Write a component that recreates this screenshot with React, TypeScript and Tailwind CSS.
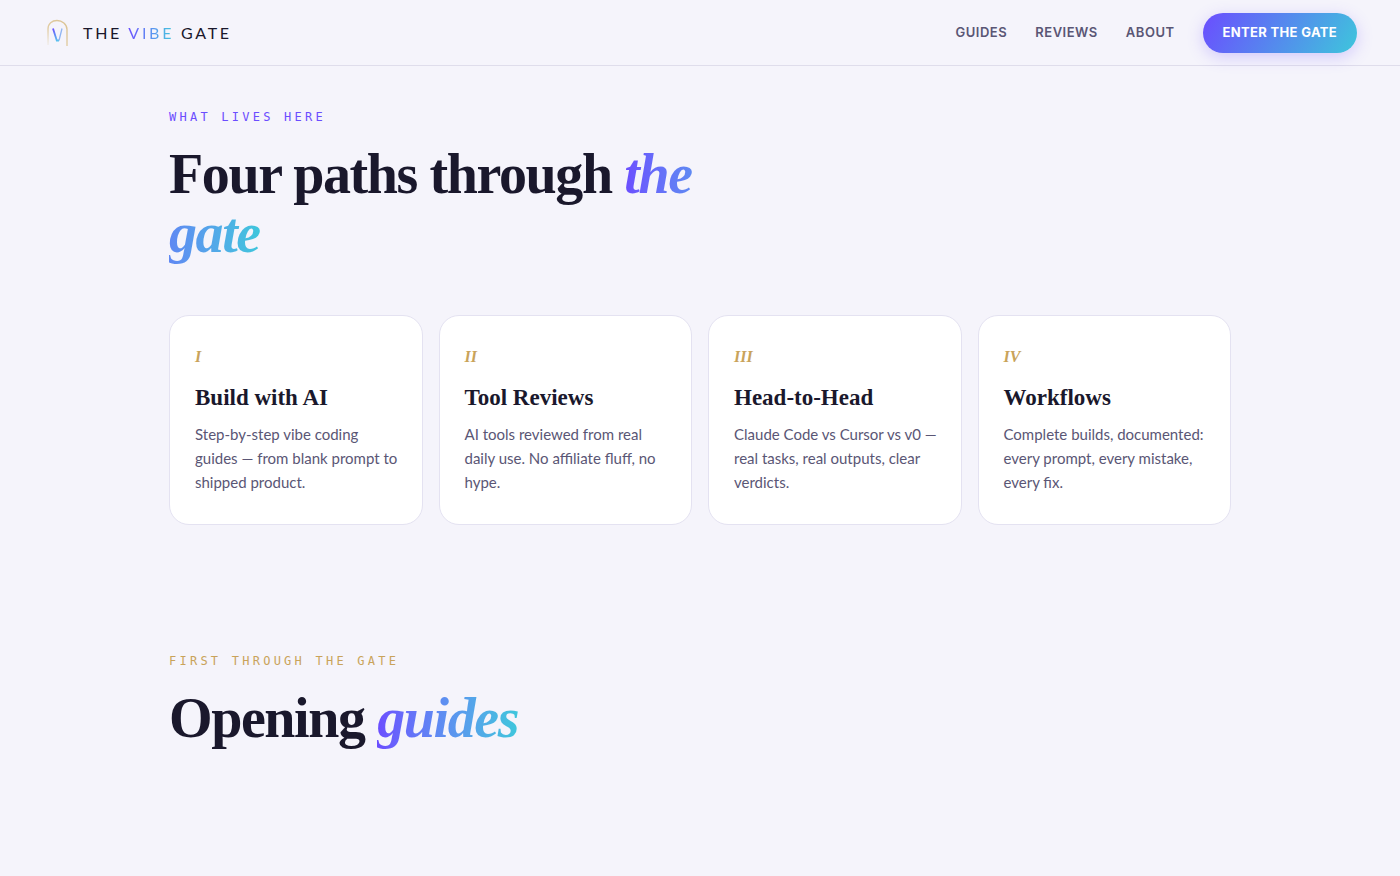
import React from "react";

interface PathCardProps {
  numeral: string;
  title: string;
  desc: string;
}

interface SectionHeadingProps {
  label: string;
  labelColor: string;
  title: string;
  accent: string;
}

const navLinks = ["Guides", "Reviews", "About"];

const paths: PathCardProps[] = [
  {
    numeral: "I",
    title: "Build with AI",
    desc: "Step-by-step vibe coding guides — from blank prompt to shipped product.",
  },
  {
    numeral: "II",
    title: "Tool Reviews",
    desc: "AI tools reviewed from real daily use. No affiliate fluff, no hype.",
  },
  {
    numeral: "III",
    title: "Head-to-Head",
    desc: "Claude Code vs Cursor vs v0 — real tasks, real outputs, clear verdicts.",
  },
  {
    numeral: "IV",
    title: "Workflows",
    desc: "Complete builds, documented: every prompt, every mistake, every fix.",
  },
];

const Logo = () => (
  <svg width="28" height="32" viewBox="0 0 28 32" fill="none" aria-hidden="true">
    <defs>
      <linearGradient id="arch" x1="24" y1="10" x2="6" y2="28" gradientUnits="userSpaceOnUse">
        <stop stopColor="#dcc596" />
        <stop offset="0.6" stopColor="#e2cea6" />
        <stop offset="1" stopColor="#f0ebe6" />
      </linearGradient>
      <linearGradient id="vee" x1="10" y1="11" x2="15" y2="24" gradientUnits="userSpaceOnUse">
        <stop stopColor="#6b4dff" />
        <stop offset="1" stopColor="#58c4ee" />
      </linearGradient>
    </defs>
    <path d="M5 28V12C5 6.5 9 3.5 14 3.5C19 3.5 24 7 24 12.5V29" stroke="url(#arch)" strokeWidth="1.4" />
    <path d="M10 11.5L13.8 23.5H16" stroke="url(#vee)" strokeWidth="1.8" />
    <path d="M16 23.5L19 11.5" stroke="#8fb4f2" strokeWidth="1.3" />
  </svg>
);

const SectionHeading = (props: SectionHeadingProps) => {
  return (
    <div className="flex flex-col gap-5">
      <p className={`font-['DejaVu_Sans_Mono',monospace] text-xs uppercase tracking-[0.27em] ${props.labelColor}`}>
        {props.label}
      </p>
      <h2 className="max-w-[560px] font-['Liberation_Serif',serif] text-[56px] leading-[59px] font-bold tracking-tight text-[#1a182c]">
        {props.title}{" "}
        <em className="bg-linear-to-r from-[#6b4dff] to-[#3ec6dc] bg-clip-text text-transparent">{props.accent}</em>
      </h2>
    </div>
  );
};

const PathCard = (props: PathCardProps) => {
  return (
    <article className="rounded-[20px] border border-[#e4e2f1] bg-white pt-7 pr-5 pb-[30px] pl-[25px]">
      <p className="font-['Liberation_Serif',serif] text-base leading-[26px] font-bold text-[#c9a35a] italic">
        {props.numeral}
      </p>
      <h3 className="mt-3.5 font-['Liberation_Serif',serif] text-[23px] leading-7 font-bold text-[#1a182c]">
        {props.title}
      </h3>
      <p className="mt-2.5 font-['Lato',sans-serif] text-[15px] leading-6 text-[#5a5675]">{props.desc}</p>
    </article>
  );
};

export default function App() {
  return (
    <div className="min-h-screen bg-[#f5f4fb]">
      <header className="flex h-[66px] items-center justify-between border-b border-[#dfddeb] px-[43px]">
        <a href="#" className="flex items-center gap-3">
          <Logo />
          <span className="font-['Lato',sans-serif] text-base tracking-[0.17em] text-[#1a182c]">
            THE{" "}
            <span className="bg-linear-to-r from-[#6b4dff] to-[#3ec6dc] bg-clip-text text-transparent">VIBE</span> GATE
          </span>
        </a>
        <nav className="flex items-center gap-7 font-['Inter',sans-serif] text-[13px] font-semibold tracking-[0.04em] uppercase text-[#5a5675]">
          {navLinks.map((link) => (
            <a key={link} href="#">
              {link}
            </a>
          ))}
          <button className="h-10 rounded-full bg-linear-[120deg] from-[#6b4dff] to-[#3ec6dc] px-5 font-bold tracking-wide text-white uppercase shadow-[0_4px_16px_rgba(107,77,255,0.25)]">
            Enter the Gate
          </button>
        </nav>
      </header>
      <main className="mx-auto max-w-[1150px] px-11 pt-[43px]">
        <section>
          <SectionHeading label="What lives here" labelColor="text-[#6b4dff]" title="Four paths through" accent="the gate" />
          <div className="mt-[52px] grid grid-cols-4 gap-4">
            {paths.map((path) => (
              <PathCard key={path.numeral} {...path} />
            ))}
          </div>
        </section>
        <section className="pt-32">
          <SectionHeading label="First through the gate" labelColor="text-[#c9a35a]" title="Opening" accent="guides" />
        </section>
      </main>
    </div>
  );
}
